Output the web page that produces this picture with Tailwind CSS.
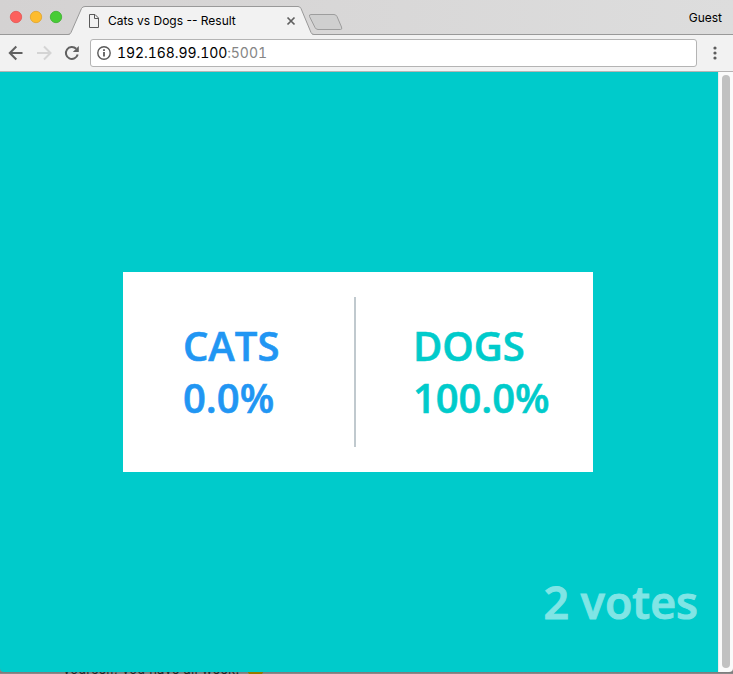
<!DOCTYPE html>
<html lang="en">
<head>
<meta charset="utf-8">
<title>Cats vs Dogs -- Result</title>
<script src="https://cdn.jsdelivr.net/npm/@tailwindcss/browser@4"></script>
</head>
<body class="w-[733px] h-[674px] overflow-hidden bg-[#858585] flex flex-col font-[Inter,sans-serif] text-black">
<div class="h-[672px] shrink-0 flex flex-col rounded-b-[4px] overflow-hidden">
  <header class="relative h-[35px] shrink-0 flex bg-linear-to-r from-[#d4d2d2] to-[#dddddd]">
    <svg class="absolute inset-0" width="733" height="35" viewBox="0 0 733 35" fill="none">
      <path d="M0 34.500H68Q70 34.500 71 32.500L81.500 8.500Q82.500 6.500 85 6.500H298Q300 6.500 301 8.500L311 32.500Q312 34.500 314 34.500H733V35H0Z" fill="#f2f2f2" stroke="#999"/>
      <path d="M70 34.500H312" stroke="#f2f2f2" stroke-width="1"/>
      <path d="M311 14.500H334Q336 14.500 337 16.500L341.500 27Q342.500 29.500 340.500 29.500H318Q316 29.500 315 27.500L309.500 16.500Q308.800 14.500 311 14.500Z" fill="#cfcfcf" stroke="#9d9d9d"/>
      <g stroke-width=".8">
        <circle cx="16" cy="17" r="5.700" fill="#fc615d" stroke="#e25552"/>
        <circle cx="36" cy="17" r="5.700" fill="#fdbc2e" stroke="#dfa32c"/>
        <circle cx="56" cy="17" r="5.700" fill="#47cc35" stroke="#3cae30"/>
      </g>
      <path d="M89.500 14.500H95L98.500 18V27.500H89.500ZM94.500 14.500V18.500H98.500" stroke="#5a5a5a"/>
      <path d="M287.500 17.500L294.500 24.500M294.500 17.500L287.500 24.500" stroke="#606060" stroke-width="1.700"/>
    </svg>
    <span class="relative ml-[108px] mt-[13px] text-[12px] leading-4 whitespace-nowrap">Cats vs Dogs -- Result</span>
    <span class="relative ml-auto mr-[11px] mt-[10px] text-[12px] leading-4">Guest</span>
  </header>
  <nav class="h-[37px] shrink-0 flex items-start bg-[#f2f2f2] border-b border-[#b6b4b4] pt-1">
    <svg class="shrink-0" width="90" height="28" viewBox="0 39 90 28" fill="none" stroke-width="2">
      <path d="M22.500 53H10M16.300 46.500L9.800 53L16.300 59.500" stroke="#616161"/>
      <path d="M37 53H49.500M44 46.500L50.500 53L44 59.500" stroke="#d4d4d4"/>
      <path d="M76.200 48.800A6 6 0 1 0 77.700 54.600" stroke="#616161"/>
      <path d="M78.800 46V52H72.800Z" fill="#616161"/>
    </svg>
    <div class="w-[607px] h-[28px] shrink-0 bg-white border border-[#b4b4b4] rounded-[3px] flex items-center">
      <svg class="ml-[6px] shrink-0" width="14" height="14" viewBox="0 0 14 14" fill="none">
        <circle cx="7" cy="7" r="6.200" stroke="#5a5a5a" stroke-width="1.400"/>
        <path d="M7 6V10.500M7 3.300V4.900" stroke="#5a5a5a" stroke-width="1.800"/>
      </svg>
      <span class="ml-[6px] text-[14px] leading-5 tabular-nums tracking-[-0.07px] whitespace-nowrap">192.168.99.100<span class="text-[#858585]">:5001</span></span>
    </div>
    <svg class="ml-[14px]" width="8" height="28" viewBox="0 0 8 28" fill="#5c5c5c"><circle cx="4" cy="9" r="1.600"/><circle cx="4" cy="14" r="1.600"/><circle cx="4" cy="19" r="1.600"/></svg>
  </nav>
  <div class="flex-1 flex min-h-0">
    <main class="w-[718px] bg-[#00cbcb] font-['Open_Sans',sans-serif] font-semibold pt-[200px]">
      <section class="ml-[123px] w-[470px] h-[200px] bg-white flex py-[25px] text-[40px] leading-[52px] [-webkit-text-stroke:0.6px_currentColor]">
        <div class="w-[233px] border-r-2 border-[#c0c9ce] pl-[60px] pt-[23px] text-[#2196f3]">
          <div>CATS</div><div>0.0%</div>
        </div>
        <div class="pl-[57px] pt-[23px] text-[#00cbcb]">
          <div>DOGS</div><div class="tracking-[-0.1px]">100.0%</div>
        </div>
      </section>
      <div class="mt-[100px] pr-[20px] text-right text-[45px] leading-[60px] text-[#80e5e5] [-webkit-text-stroke:1px_#80e5e5]">2 votes</div>
    </main>
    <aside class="w-[15px] bg-[#fafafa] border-l border-[#ececec] pl-[3px] pt-[3px]">
      <div class="w-[8px] h-[593px] rounded-full bg-[#c1c1c1]"></div>
    </aside>
  </div>
</div>
<footer class="h-[2px] shrink-0 overflow-hidden flex items-end bg-linear-to-b from-[#777] to-[#929090] pl-[63px] text-[#252525]">
  <span class="h-[12px] w-[184px] text-[13px] leading-[14px] tracking-[0.25px] whitespace-nowrap">yourself, you have all week.</span>
  <svg width="17" height="14" viewBox="0 0 17 14"><circle cx="8.500" cy="8.500" r="8.500" fill="#967a00"/></svg>
</footer>
</body>
</html>
